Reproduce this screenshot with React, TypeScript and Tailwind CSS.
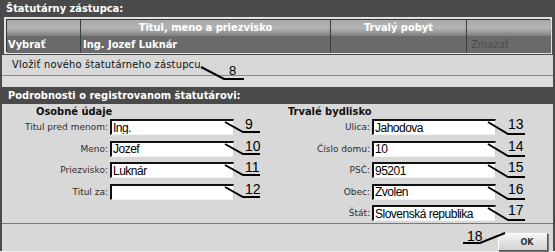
import React from 'react';

const ui = "font-['DejaVu_Sans_Condensed','DejaVu_Sans',sans-serif]";
const arial = "font-['Liberation_Sans',Arial,sans-serif]";

type Field = { label: string; value: string; n: string };

const personal: Field[] = [
  { label: 'Titul pred menom:', value: 'Ing.', n: '9' },
  { label: 'Meno:', value: 'Jozef', n: '10' },
  { label: 'Priezvisko:', value: 'Luknár', n: '11' },
  { label: 'Titul za:', value: '', n: '12' },
];

const address: Field[] = [
  { label: 'Ulica:', value: 'Jahodova', n: '13' },
  { label: 'Číslo domu:', value: '10', n: '14' },
  { label: 'PSČ:', value: '95201', n: '15' },
  { label: 'Obec:', value: 'Zvolen', n: '16' },
  { label: 'Štát:', value: 'Slovenská republika', n: '17' },
];

// numbered pointer drawn over the right end of an input
function Callout({ n, side }: { n: string; side: 'left' | 'right' }) {
  const d = side === 'left' ? 'M0 1 L18 11 L35 11' : 'M0 1 L20 13 L37 13';
  return (
    <div
      className={`pointer-events-none absolute top-[2px] h-[14px] w-[38px] ${
        side === 'left' ? 'left-[calc(100%-9px)]' : 'left-[calc(100%-8px)]'
      }`}
    >
      <svg width="38" height="16" className="absolute left-0 top-0 overflow-visible">
        <path d={d} fill="none" stroke="#000" strokeWidth="2" />
      </svg>
      <span className={`absolute left-[20px] top-[-4px] text-[14px] leading-[14px] text-black ${arial}`}>{n}</span>
    </div>
  );
}

function FieldRow({ field, side }: { field: Field; side: 'left' | 'right' }) {
  return (
    <div className="flex h-[16px] items-center gap-[2px]">
      <label className="w-[106px] text-right text-[9px] leading-[16px] text-[#2e2e2e] font-['DejaVu_Sans',sans-serif]">
        {field.label}
      </label>
      <div className="relative h-[16px] w-[124px]">
        <input
          readOnly
          value={field.value}
          className={`block h-full w-full border-t-2 border-l-2 border-r border-b border-t-[#111] border-l-[#111] border-r-[#cfcfcf] border-b-[#f2f2f2] bg-white px-[1px] text-[12px] leading-[13px] tracking-[-0.5px] text-black outline-none ${arial}`}
        />
        <Callout n={field.n} side={side} />
      </div>
    </div>
  );
}

function Column({ title, fields, side, titlePad }: { title: string; fields: Field[]; side: 'left' | 'right'; titlePad: string }) {
  return (
    <div className="flex w-[262px] flex-col">
      <div className={`h-[15px] text-[11px] font-bold leading-[15px] text-[#111] ${titlePad} ${ui}`}>{title}</div>
      <div className="flex flex-col gap-[5.5px]">
        {fields.map((f) => (
          <FieldRow key={f.label} field={f} side={side} />
        ))}
      </div>
    </div>
  );
}

export default function App() {
  return (
    <div className={`flex h-[252px] w-[555px] flex-col overflow-hidden bg-[#4a4a4a] ${ui}`}>
      <div className="h-[17px] pl-[6px] text-[11px] font-bold leading-[17px] text-white">Štatutárny zástupca:</div>

      <div className="mx-[4px] h-[37px] w-[548px] border-2 border-[#e2e2e2]">
        <div className="grid h-full grid-cols-[74px_250px_136px_84px] grid-rows-[16px_17px] border border-[#353535] text-[11px] font-bold text-white">
          <div className="border-r border-[#3c3c3c] bg-gradient-to-b from-[#a9a9a9] via-[#b4b4b4] to-[#7f7f7f]" />
          <div className="border-r border-[#3c3c3c] bg-gradient-to-b from-[#a9a9a9] via-[#b4b4b4] to-[#7f7f7f] text-center leading-[16px]">
            Titul, meno a priezvisko
          </div>
          <div className="border-r border-[#3c3c3c] bg-gradient-to-b from-[#a9a9a9] via-[#b4b4b4] to-[#7f7f7f] text-center leading-[16px]">
            Trvalý pobyt
          </div>
          <div className="bg-gradient-to-b from-[#a9a9a9] via-[#b4b4b4] to-[#7f7f7f]" />
          <div className="border-r border-[#3c3c3c] bg-[#6a6a6a] pl-[1px] leading-[17px]">Vybrať</div>
          <div className="border-r border-[#3c3c3c] bg-[#6a6a6a] pl-[2px] leading-[17px]">Ing. Jozef Luknár</div>
          <div className="border-r border-[#3c3c3c] bg-[#6a6a6a]" />
          <div className="bg-[#6a6a6a] pl-[4px] font-normal leading-[17px] text-[#4c4c4c]">Zmazať</div>
        </div>
      </div>

      <div className="relative mx-[2px] mt-[1px] h-[21px] border-b border-[#8a8a8a] bg-[#d8d8d8] pl-[10px] text-[11px] leading-[20px] tracking-[0.2px] text-[#111]">
        Vložiť nového štatutárneho zástupcu
        <div className="pointer-events-none absolute left-[198px] top-[11px] h-[14px] w-[46px]">
          <svg width="46" height="16" className="absolute left-0 top-0">
            <path d="M1 1 L24 13 L44 13" fill="none" stroke="#000" strokeWidth="2" />
          </svg>
          <span className={`absolute left-[29px] top-[-2px] text-[13px] leading-[13px] text-black ${arial}`}>8</span>
        </div>
      </div>
      <div className="mx-[2px] h-[11px] bg-[#dcdcdc]" />

      <div className="h-[17px] pl-[8px] text-[11px] font-bold leading-[17px] text-white">
        Podrobnosti o registrovanom štatutárovi:
      </div>

      <div className="mx-[2px] flex h-[119px] bg-[#d8d8d8]">
        <Column title="Osobné údaje" fields={personal} side="left" titlePad="pl-[34px]" />
        <Column title="Trvalé bydlisko" fields={address} side="right" titlePad="pl-[24px]" />
      </div>
      <div className="mx-[2px] h-[1px] bg-[#7a7a7a]" />

      <div className="mx-[2px] flex h-[27px] justify-end bg-[#d8d8d8] pr-[5px] pt-[4px]">
        <div className="relative">
          <div className="pointer-events-none absolute left-[-35px] top-[3px] h-[14px] w-[44px]">
            <svg width="44" height="16" className="absolute left-0 top-0 overflow-visible">
              <path d="M0 12 L17 12 L42 2" fill="none" stroke="#000" strokeWidth="2" />
            </svg>
            <span className={`absolute left-[4px] top-[-2px] text-[14px] leading-[14px] text-black ${arial}`}>18</span>
          </div>
          <button className="h-[18px] w-[50px] border border-t-white border-l-white border-r-[#555] border-b-[#555] bg-gradient-to-b from-[#f4f4f4] to-[#d2d2d2] pl-[8px] text-[9px] font-bold leading-[16px] text-[#333] shadow-[1px_1px_0_#7a7a7a]">
            OK
          </button>
        </div>
      </div>
      <div className="h-[1px] bg-[#efefef]" />
    </div>
  );
}
